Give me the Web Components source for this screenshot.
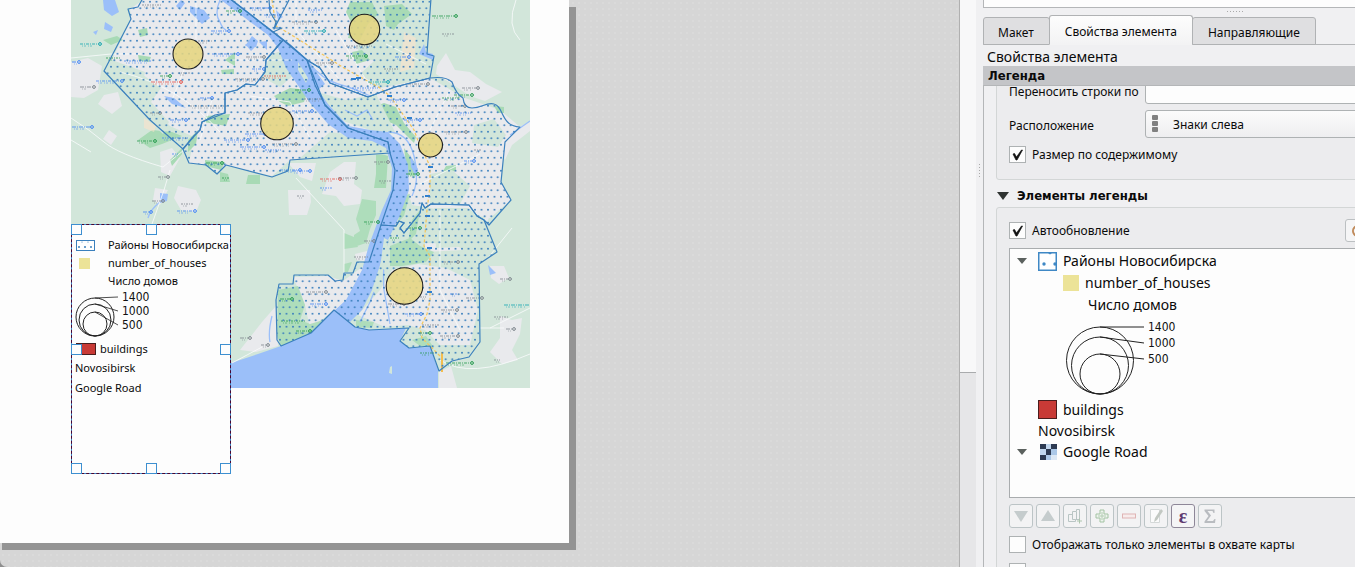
<!DOCTYPE html>
<html lang="ru">
<head>
<meta charset="utf-8">
<title>Макет</title>
<style>
html, body { height: 100%; margin: 0; }
body { overflow: hidden; background: #efeff1; color: #0a0a0a; font: 12px/16px "Noto Sans", sans-serif; }
</style>
</head>
<body>
<layout-designer></layout-designer>
<script>
const define = (name, html, setup) => {
  const tpl = document.createElement('template');
  tpl.innerHTML = html;
  customElements.define(name, class extends HTMLElement {
    constructor() {
      super();
      this.attachShadow({ mode: 'open' }).append(tpl.content.cloneNode(true));
    }
    connectedCallback() { if (setup) setup(this, this.shadowRoot); }
  });
};

/* Nested proportional circles with their values */
define('size-legend', `
<style>
:host { display: block; }
svg { display: block; width: 100%; height: 100%; overflow: visible; }
text { font: 12px "DejaVu Sans Condensed", "DejaVu Sans", sans-serif; fill: #111; }
</style>
<svg></svg>`, (el, root) => {
  const small = el.hasAttribute('compact');
  const [cx, base, tx, radii, rows] = small
    ? [20, 39, 47, [19, 16, 12], [-1, 13, 27]]
    : [34, 75, 82, [33.5, 28.5, 20], [8, 24, 40]];
  root.querySelector('svg').innerHTML = radii.map((r, i) => `
    <circle cx="${cx}" cy="${base - r}" r="${r}" fill="none" stroke="#222"/>
    <path d="M${cx} ${base - 2 * r}L${tx - 4} ${rows[i] + (small ? 1 : 0)}" stroke="#222" stroke-width="${small ? .8 : 1}"/>
    <text x="${tx}" y="${rows[i] + (small ? 5 : 4)}">${[1400, 1000, 500][i]}</text>`).join('');
});

/* Map with district polygons and proportional symbols */
define('city-map', `
<style>:host { display: block; } svg { display: block; }</style>
<svg width="459" height="388" viewBox="71 0 459 388" role="img" aria-label="Novosibirsk">
<defs>
  <pattern id="dots" patternUnits="userSpaceOnUse" x="436" y="226" width="6.5" height="13">
    <circle cx="3.25" cy="3.25" r=".95" fill="#3b80bd"/>
    <circle cx="0" cy="9.75" r=".95" fill="#3b80bd"/><circle cx="6.5" cy="9.75" r=".95" fill="#3b80bd"/>
  </pattern>
</defs>
<rect x="71" width="459" height="388" fill="#d2e6da"/>
<g fill="#e9eaed">
  <path d="M143 0L130 9 131 19 112 60 145 72 140 95 170 126 194 137 189 163 206 165 217 172 226 165 272 176 289 161 300 158 330 132 392 140 412 205 490 218 511 200 501 182 505 142 520 127 500 110 465 98 430 78 400 60 360 60 350 0Z"/>
  <path d="M71 62L88 58 102 66 98 90 84 98 71 97ZM104 95L118 92 122 106 112 114 98 104ZM109 130L117 136 111 145 103 139ZM160 152L172 148 180 158 170 176 161 172ZM155 188L168 190 160 205 153 200ZM178 186L196 190 201 200 196 212 181 210 174 198Z"/>
  <path d="M436 74L437 66 446 53 455 70 470 72 486 84 502 92 485 101 470 96 455 86ZM508 132L530 122 530 131 512 145 505 160 502 150Z"/>
  <path d="M288 190h22l1 12 -4 13h-18ZM330 172l14 -10 12 0 -2 22 8 6 -2 14-16 2-8-10-14-2ZM355 254l16 -4 0 12-15-2ZM288 163h28l-4 18-12-4Z"/>
  <path d="M293 277L328 276 343 281 369 262 352 300 334 311 310 328 305 305ZM358 315L380 290 392 270 418 264 446 268 470 280 478 310 470 345 440 345 425 330 408 325 385 327ZM456 235L490 215 485 228 468 240ZM425 243l30 1 8 6-38 2Z"/>
  <path d="M240 350L262 322 276 306 278 346 256 352ZM184 280l8-6 2 14 20-2-2 20-24 8ZM490 266l14 0 5 12-10 6-8-6ZM500 316l12 4 10 -2-2 16 -8 16 6 10-16 4-12-12 10-14ZM439 372l12-6 6 22h-18Z"/>
</g>
<g fill="#a8dab5">
  <path d="M103 40l14-4 6 4-12 5ZM138 30l9-2 1 7-8 2ZM225 60l10-8v14ZM138 55l13 2-2 5-10-1ZM221 70l13-1v5h-12ZM206 116l24-2-4 12-22-4ZM274 96l16-8 18 2-4 12-16 4-8-4ZM138 140l14-10 20 2 10 4-20 8-12 4ZM188 140l10-10-2 14-8 8ZM205 160l20 2-4 8-16-4ZM220 172l8 2 2 8h-10ZM248 175h12v9h-14ZM170 160l12-12 0 6-10 12Z"/>
  <path d="M350 2h22l6 12-10 10-8 16-12-2 4-14-6-12ZM384 6l18-2 10 10-14 10-4 6-8-4ZM352 52l10-2 8 10-14 4ZM376 106l8-3 12 4 8 16 12 14-2 6-18-18-17-7ZM376 152l12 4-2 32-12 0 2-14ZM404 148l12 16-1 14-8-4ZM446 166l10-1 0 6-14 2ZM404 164l8 4 -2 6-8-2ZM494 106l10 1v6h-6Z"/>
  <path d="M278 290L298 286 305 305 300 320 310 324 330 318 312 333 281 346 277 336ZM344 233l10 4 4 10-14 2ZM362 199l14 2 0 14-6 14-4 14-12 4 0-12 6-4-4-12ZM390 246l20-8 10 8 14 6-8 10-24 4-12 0ZM402 196l8-2-6 22-6 6ZM412 220l8-10-4 24-8 8ZM344 264l8-2-4 10h-4ZM356 320l18 2-2 6-16-1ZM412 340l14 -4 8 12-14-2Z" opacity=".85"/>
</g>
<path fill="#d2e6da" d="M392 40l38-10 0 26 0 22-50 10-20 -14 26-24ZM310 90l36 10 30-6 20 40 -20-2-30-10-30-14ZM474 125l20-6 12 16-8 12-26-4ZM430 174l22-4 18 16-10 18-30 0ZM131 66l30 22-10 14 18 20-6 12-26-24-34-38ZM270 55l16-6 10 24-16 14-18-10ZM330 140l30 0 30 6 0 8-70 4-10-8ZM434 208l34 0 20 14-10 24-42 2Z"/>
<path fill="#fbe3cc" opacity=".6" d="M404 32l12 6-2 30-14 4ZM144 118l12 8-2 6-10-4Z"/>
<g fill="#9bbff9">
  <path d="M221 0h12L290 44 308 60 325 84 318 90 328 104 348 126 370 130 388 132 400 144 408 165 409 190 400 215 388 240 380 265 372 290 362 310 350 322 334 311 346 300 362 270 369 245 382 210 391 190 392 168 386 148 372 141 348 138 328 124 310 103 286 68 278 48 268 35 245 18Z"/>
  <path d="M231 363L258 354 281 346 310 333 334 310 355 327 369 330 406 328 400 341 409 348 430 347 438 370V388H231Z"/>
  <path d="M103 0h12l4 12-7 4-8-6ZM105 22l8 5-2 5-7-3ZM181 0l4 3-5 7-4-4ZM190 6l14 4 6 8-8 6-12-12ZM252 36l6 5-2 6-11-1ZM164 96l10 2 12 10-14-4ZM93 32l5-2-2 5ZM259 42l8-1v9ZM424 44l2 8 7 2 0 6-14-6ZM276 10l7 7-5 3ZM160 193l8 1-1 7-7 2ZM488 265l8 8 -6 2ZM245 44l12 1-6 6ZM410 155l8 14-2 8-5-10Z"/>
</g>
<g fill="none" stroke="#9bbff9" stroke-width="1.3">
  <path d="M220 0q-6 14 0 22q2 6 6 8M160 202q-10 8-12 16M308 62q15 18 30 22t32 12M345 110l12 6 10-6 6 10M388 132q20 0 26 24t-2 40M388 240q-6 20-4 50l6 34M272 316q-4 16-2 26M510 135l20-14M360 322l10-20 4-10"/>
</g>
<g fill="#d2e6da"><path d="M384 238l4 2-3 30-5-2ZM298 62l10 16-2 5-8-13ZM390 367l2-1 0 8-3-1Z"/></g>
<g fill="none" stroke="#fafbfc" stroke-width=".8">
  <path d="M71 118Q90 130 104 142T163 167M163 167L184 150M296 178L344 230V275M71 58l40-4 30 0M120 72q60 14 100 60M196 0v40l-24 60M232 60h60M520 40q-14-14-4-40M232 363l30-16M480 328h24M440 360q30 20 90-6M420 184l60-30M170 170l-6 20-12 34M71 140l20 12M488 258l24-30M490 328l40-20M296 0v30l44 50M250 96l40 6 20 36M212 100l-12 40M336 30l36 60M386 44l40 20M450 90l-30 60M440 210v80l20 40"/>
</g>
<path fill="none" stroke="#f6c65a" stroke-width="1.2" stroke-dasharray="3 2" d="M272 0l4 26 14 8 54 34 36 20 10 8 24 34 6 16 10 20v20l-3 24-3 36 6 10v44l-3 14-7 14 2 10 12 12 6 6"/>
<path stroke="#f4bd4e" stroke-width="2" d="M442 352v20"/>
<g id="labels" fill="none"></g>
<g id="districts" fill="url(#dots)" stroke="#3b80bd" stroke-width="1.2" stroke-linejoin="round">
  <path d="M143 -2L138 7 128 9 131 19 104 71 150 120 183 149 194 136 200 130 202 122 225 113 225 93 237 90 246 84 255 85 265 72 266 60 283 40 229 -2Z"/>
  <path d="M183 149L189 163 206 165 217 174 226 165 272 177 288 171 290 160 390 153 388 142 348 128 325 105 315 85 307 60 283 40 266 60 265 72 255 85 246 84 237 90 225 93V113L215 115 202 122 200 130 194 136Z"/>
  <path d="M229 -2L290 45 307 60 320 68 330 83 368 97 395 87 430 78 434 56 427 54 431 -2Z"/>
  <path d="M430 78Q446 76 452 82Q456 94 463 98Q464 108 472 108C482 108 486 102 494 104C504 106 500 126 520 127L505 142 501 182 511 200 489 225 484 220 477 216 469 205 431 204 425 208 422 203 420 213 404 233 400 228 404 223 399 221 396 226 381 225 393 190 395 170 390 153 388 142 348 128 325 105 307 60 320 68 330 83 368 97 395 87Z"/>
  <path d="M381 225L369 262 357 262 353 273 344 273 343 280 335 281 328 275 294 275 293 284 279 284 276 300 277 340 281 346 311 333 334 310 355 327 369 330 409 328 400 341 409 348 430 346 439 371 452 361 469 357 480 342 479 264 497 252 484 220 477 216 469 205 431 204 425 208 422 203 420 213 404 233 400 228 404 223 399 221 396 226Z"/>
  <path fill="none" d="M269 0L270 12 276 22 274 29 289 0M275 28h7l-9 4"/>
</g>
<g fill="#e5d57f" fill-opacity=".88" stroke="#1f1f1f" stroke-width="1.1">
  <circle cx="188" cy="54" r="15"/><circle cx="277" cy="123.500" r="16.300"/><circle cx="364.500" cy="29.500" r="15.200"/><circle cx="430.500" cy="145" r="12"/><circle cx="404.500" cy="286" r="18.300"/>
</g>
</svg>`, (el, root) => {
  const colours = { b: '#4285f4', g: '#239a4b', k: '#7d858c', r: '#e5534b', t: '#12a4af' };
  const places = [
    [142,5,20,'k'],[226,11,12,'g'],[211,31,16,'b'],[198,41,14,'k'],[212,54,24,'b'],[246,57,16,'k'],[124,61,28,'b'],[80,44,18,'t'],[72,62,5,'b'],[106,58,14,'g'],[160,76,8,'g'],[151,82,28,'r'],[178,73,12,'k'],[96,81,24,'b'],[80,87,12,'k'],[264,76,22,'r'],[235,79,26,'k'],[200,98,10,'b'],[190,106,38,'k'],[150,113,8,'k'],[170,120,14,'b'],[162,138,26,'b'],[137,141,16,'g'],[72,127,18,'b'],[172,154,6,'b'],[158,177,8,'k'],[206,163,14,'g'],[222,178,8,'g'],[224,140,22,'b'],[240,147,22,'b'],[265,150,16,'b'],[272,144,22,'k'],[245,134,18,'b'],[248,113,18,'k'],[280,170,18,'b'],[292,171,16,'b'],
    [308,10,14,'b'],[292,22,22,'k'],[304,31,18,'t'],[346,46,26,'k'],[346,56,18,'g'],[395,57,12,'b'],[384,69,14,'k'],[316,63,14,'k'],[368,82,18,'t'],[352,88,26,'b'],[408,84,18,'k'],[388,100,14,'b'],[442,98,18,'g'],[454,95,16,'g'],[451,106,12,'k'],[455,113,16,'b'],[404,120,14,'b'],[444,132,20,'k'],[474,150,8,'k'],[464,161,8,'b'],[432,16,22,'g'],[442,34,12,'k'],[462,88,14,'k'],[295,90,12,'g'],[304,99,20,'k'],[320,179,18,'r'],[338,178,16,'k'],[320,188,12,'b'],[374,162,12,'k'],[406,174,10,'g'],[379,181,12,'k'],[292,111,18,'b'],[250,8,18,'b'],[264,15,18,'b'],[252,69,10,'b'],
    [152,201,9,'k'],[181,204,12,'k'],[177,211,16,'b'],[143,212,6,'b'],[297,196,8,'k'],[364,222,12,'g'],[364,241,8,'k'],[354,257,14,'k'],[306,292,18,'k'],[310,304,14,'b'],[281,321,24,'g'],[296,331,12,'g'],[280,299,10,'g'],[390,238,10,'g'],[408,228,10,'g'],[442,262,14,'k'],[450,294,8,'b'],[466,298,14,'k'],[388,304,14,'k'],[420,297,6,'k'],[405,314,14,'b'],[441,310,14,'k'],[422,325,18,'k'],[440,336,16,'k'],[418,333,10,'g'],[420,353,14,'g'],[446,363,24,'g'],[504,305,26,'t'],[494,317,14,'k'],[500,279,8,'k'],[506,329,6,'k'],[494,360,6,'k'],[261,345,5,'k'],[240,338,8,'k']
  ];
  root.getElementById('labels').innerHTML = places.map(([x, y, w, c], i) => {
    const s = colours[c];
    return `<path d="M${x} ${y}h${w}" stroke="${s}" stroke-dasharray="${2 + i % 3} 1 1 1" stroke-width="1.2" opacity=".8"/>
      <path d="M${x + 2} ${y + 2}h${Math.max(3, w - 7)}" stroke="${s}" stroke-dasharray="1 1 2 2" opacity=".5"/>` +
      (i % 3 ? `<circle cx="${x + w + 2}" cy="${y}" r="1.4" stroke="${s}"/>` : '');
  }).join('') + [[353,79],[358,78],[389,96],[409,118],[430,167],[427,196],[427,216],[429,248],[429,292]]
    .map(([x, y]) => `<path d="M${x - 2} ${y}h5" stroke="#2f7fd0" stroke-width="2"/>`).join('');
});

/* Selected legend item on the sheet */
define('legend-item', `
<style>
:host { display: block; box-sizing: border-box; width: 160px; height: 250px; border: 1px dashed #4a0530; background: linear-gradient(#fdfdfd, #fdfdfd) padding-box, #3d8fd0 border-box; font-size: 11px; line-height: 18px; }
ul { list-style: none; margin: 0; padding: 11px 0 0 3px; }
li { display: flex; align-items: center; white-space: nowrap; height: 18px; }
svg { flex: none; }
.key { display: flex; width: 33px; flex: none; }
.tall { height: 20px; }
size-legend { width: 90px; height: 42px; margin-top: 7px; }
.circles { height: 50px; align-items: flex-start; }
.handles { position: absolute; inset: -1px; display: grid; grid-template-columns: repeat(3, 11px); grid-template-rows: repeat(3, 11px); justify-content: space-between; align-content: space-between; }
.handles i { box-sizing: border-box; border: 1px solid #3d8fd0; background: #fdfdfd; }
.handles i:nth-child(5) { visibility: hidden; }
</style>
<ul>
<li><span class="key"><svg width="20" height="11"><rect x="1.500" y=".5" width="18" height="10" fill="#fff" stroke="#3b80bd"/><g fill="#3b80bd"><circle cx="4" cy="7" r="1"/><circle cx="10" cy="7" r="1"/><circle cx="16" cy="7" r="1"/><circle cx="7" cy="2" r=".6"/><circle cx="13" cy="2" r=".6"/></g></svg></span>Районы Новосибирска</li>
<li><span class="key"><svg width="16" height="11"><rect x="4" width="11" height="11" fill="#ece398"/></svg></span>number_of_houses</li>
<li><span class="key"></span>Число домов</li>
<li class="circles"><size-legend compact></size-legend></li>
<li><svg width="25" height="12"><rect x="1.500" y=".5" width="19" height="11" fill="#c83a36" stroke="#4a1d1d"/></svg>buildings</li>
<li class="tall">Novosibirsk</li>
<li class="tall">Google Road</li>
</ul>
<div class="handles"><i></i><i></i><i></i><i></i><i></i><i></i><i></i><i></i><i></i></div>`);

define('layout-canvas', `
<style>
:host { display: block; overflow: hidden; border-bottom-left-radius: 7px; background: radial-gradient(circle, #dadada 1px, transparent 1px) 0 0 / 6px 6px, #d6d6d6; }
.sheet { position: relative; width: 569px; padding-bottom: 155px; background: #fdfdfd; box-shadow: 7px 7px 0 #949494, 2px 7px 0 #949494; }
city-map { margin-left: 71px; }
legend-item { position: absolute; left: 71px; top: 224px; }
</style>
<div class="sheet"><city-map></city-map><legend-item></legend-item></div>`);

define('canvas-scrollbar', `
<style>
:host { display: flex; flex-direction: column; border-left: 1px solid #b0b0b0; background: #e6e6e8; }
div { height: 372px; background: #f8f8f9; border-bottom: 1px solid #a9abad; }
</style><div></div>`);

define('tab-strip', `
<style>
:host { display: flex; align-items: flex-end; height: 30px; background: linear-gradient(#b4b6b8, #b4b6b8) 0 100% / 100% 1px no-repeat; }
button { box-sizing: border-box; height: 28px; margin: 0; padding: 4px 15px 0 14px; border: 1px solid #b0b2b4; border-radius: 3px 3px 0 0; background: #dfdfe1; color: inherit; font: inherit; white-space: nowrap; }
button + button { margin-left: -1px; padding-left: 15px; }
button.on { height: 30px; padding-top: 3px; border-bottom-color: #f3f3f4; background: linear-gradient(#fdfdfd, #f3f3f4); }
</style>
<button>Макет</button><button class="on">Свойства элемента</button><button>Направляющие</button>`);

define('check-box', `
<style>
:host { display: block; }
label { display: flex; align-items: center; gap: 6px; height: 17px; white-space: nowrap; }
input { appearance: none; box-sizing: border-box; width: 17px; height: 17px; margin: 0; border: 1px solid #aeb2b3; background: #fdfdfd; flex: none; }
input:checked { background: #fdfdfd url("data:image/svg+xml,%3Csvg xmlns='http://www.w3.org/2000/svg' viewBox='0 0 15 15'%3E%3Cpath d='M3 7l1.500-.5 2 3.500L11.500 3h1L7 13H6z' fill='%23111' stroke='%23111' stroke-width='.7'/%3E%3C/svg%3E"); }
</style>
<label><input type="checkbox"><slot></slot></label>`, (el, root) => {
  root.querySelector('input').checked = el.hasAttribute('checked');
});

define('legend-tree', `
<style>
:host { display: block; box-sizing: border-box; height: 250px; border: 1px solid #a9acae; background: #fdfdfd; font: 14px/20px "Noto Sans", sans-serif; }
ul { list-style: none; margin: 0; padding: 1px 0 0; }
li { display: flex; align-items: center; height: 22px; white-space: nowrap; }
li.low { height: 21px; }
svg { flex: none; display: block; }
.arrow { margin: 0 11px 0 7px; }
.gap { width: 28px; flex: none; }
.l2 { padding-left: 53px; }
.l3 { padding-left: 78px; }
.icon { margin-right: 6px; }
size-legend { width: 115px; height: 78px; margin-left: 56px; }
.circles { height: 83px; align-items: flex-start; padding-top: 3px; box-sizing: border-box; }
</style>
<ul>
<li><svg class="arrow" width="10" height="6"><path d="M0 0h10L5 6z" fill="#5b615e"/></svg><svg class="icon" width="19" height="19"><rect x=".75" y=".75" width="17.500" height="17.500" fill="#fff" stroke="#3f88c5" stroke-width="1.500"/><g fill="#3f88c5"><circle cx="6" cy="12" r="1.700"/><circle cx="17" cy="12" r="1.700"/><path d="M10 1h4l-2 1.500z"/></g></svg>Районы Новосибирска</li>
<li class="l2"><svg class="icon" width="16" height="16"><rect width="16" height="16" fill="#ece398"/></svg>number_of_houses</li>
<li class="l3">Число домов</li>
<li class="circles"><size-legend></size-legend></li>
<li class="low"><span class="gap"></span><svg class="icon" width="19" height="19"><rect x=".5" y=".5" width="18" height="18" fill="#c83a36" stroke="#4a1d1d"/></svg>buildings</li>
<li class="low"><span class="gap"></span>Novosibirsk</li>
<li class="low"><svg class="arrow" width="10" height="6"><path d="M0 0h10L5 6z" fill="#5b615e"/></svg><svg class="icon" width="19" height="18"><rect x="2" y="1" width="17" height="16" fill="#abc8e8"/><path fill="#2d3a52" d="M2 1h6v5H2zM13 1h6v5h-6zM8 6h5v6H8zM2 12h6v5H2z"/><path fill="#d8e6f5" d="M8 1h5v5H8zM2 6h6v6H2z" opacity=".5"/><path fill="#fdfdfd" d="M13 12h6v5h-6z" opacity=".6"/></svg>Google Road</li>
</ul>`);

define('tree-tools', `
<style>
:host { display: flex; gap: 3px; }
button { display: grid; place-items: center; box-sizing: border-box; width: 24px; height: 24px; margin: 0; padding: 0; border: 1px solid #bcc4c6; border-radius: 3px; background: #f3f3f4; }
button.on { border-color: #8e8798; background: #f5f5f6; color: #5f3b70; font: bold 20px/20px "Liberation Serif", serif; }
</style>
<button aria-label="Вниз"><svg width="16" height="16"><path d="M1 3h14L8 14z" fill="#c5cccd"/></svg></button>
<button aria-label="Вверх"><svg width="16" height="16"><path d="M1 13h14L8 2z" fill="#c5cccd"/></svg></button>
<button aria-label="Группа"><svg width="16" height="16" fill="none" stroke="#b9c5c4"><path d="M1.500 6.500h4v-3h4v-2h3v10h-4v2h-7z"/><path d="M5.500 6v5.500h3M9.500 4v8"/><path d="M10 13h5M12.500 10.500v5" stroke="#adc5ad"/></svg></button>
<button aria-label="Добавить"><svg width="16" height="16"><path d="M6 2h4v4h4v4h-4v4H6v-4H2V6h4z" fill="#eef3ee" stroke="#a3c3a3"/><path d="M8 4v8M4 8h8" stroke="#b5ceb5"/></svg></button>
<button aria-label="Удалить"><svg width="16" height="16"><rect x="1.500" y="6" width="13" height="4" fill="#f7ecec" stroke="#dfb4b4"/></svg></button>
<button aria-label="Изменить"><svg width="16" height="16"><path d="M2.500 1.500h9v13h-9z" fill="#fbfbfb" stroke="#d4d8d8"/><path d="M13 1l2 2-6 9-3 2 1-4z" fill="#c2c8c2"/></svg></button>
<button class="on" aria-label="Выражение">ε</button>
<button aria-label="Сумма"><svg width="16" height="16"><path d="M2.500 1.500h10v3.500h-1l-1-2H5.500L9 7.500 5 13h6l1.500-2h1L13 15H2.500v-1.500L6.500 8 2.500 3z" fill="#b9bcc0"/></svg></button>`);

define('group-frame', `
<style>
:host { display: block; box-sizing: border-box; margin: 0 -20px 0 13px; border: 1px solid #d3d6d6; border-radius: 3px; background: #ececee; padding: 0 0 0 12px; }
</style><slot></slot>`);

define('item-properties', `
<style>
:host { display: flex; flex-direction: column; min-width: 0; overflow: hidden; background: #f0f0f2; }
.above { box-sizing: border-box; height: 8px; flex: none; border: solid #b4b6b8; border-width: 0 0 1px 1px; background: #fdfdfd; }
.grip { height: 7px; flex: none; display: flex; gap: 2px; padding-left: 244px; align-items: center; }
.grip i { width: 1px; height: 1px; background: #aaa; }
h2 { margin: 0; padding-left: 4px; height: 21px; font: 14px/23px "Noto Sans", sans-serif; }
h3 { margin: 0; font: bold 13px/20px "DejaVu Sans Condensed", "DejaVu Sans", sans-serif; }
.head { padding-left: 5px; height: 20px; background: #c4c5c8; border-bottom: 1px solid #b4b6b8; box-sizing: border-box; flex: none; }
tab-strip, h2 { flex: none; }
.scroll { flex: 1; min-height: 0; overflow: hidden; border-left: 1px solid #b4b6b8; box-sizing: border-box; }
.first { margin-top: -11px; height: 105px; margin-left: 12px; }
.field { display: grid; grid-template-columns: 136px 1fr; align-items: center; margin-bottom: 6px; height: 28px; }
.field + .field { margin-bottom: 8px; }
.field label { white-space: nowrap; padding-top: 4px; }
input, select { appearance: none; box-sizing: border-box; width: 100%; height: 28px; margin: 0; border: 1px solid #aeb2b3; border-radius: 3px; background: #fdfdfd; color: inherit; font: inherit; }
select { padding: 2px 0 0 27px; background: url("data:image/svg+xml,%3Csvg xmlns='http://www.w3.org/2000/svg' width='6' height='17' fill='%23808080'%3E%3Crect width='6' height='5' rx='1'/%3E%3Crect y='6' width='6' height='5' rx='1'/%3E%3Crect y='12' width='6' height='5' rx='1'/%3E%3C/svg%3E") 6px 4px no-repeat, linear-gradient(#fbfbfb, #eeeef0); }
.title { display: flex; align-items: center; gap: 8px; height: 27px; padding: 4px 0 0 13px; box-sizing: border-box; }
.second { margin-left: 12px; padding-top: 11px; height: 380px; }
.row { display: flex; justify-content: space-between; align-items: center; height: 23px; margin-bottom: 6px; }
.row button { width: 29px; height: 23px; box-sizing: border-box; border: 1px solid #bcc0c2; border-radius: 3px; background: #f5f5f6; padding: 0 0 0 6px; margin: 0; }
.row svg { display: block; }
tree-tools { margin: 6px 0 8px; }
check-box + check-box { margin-top: 10px; }
</style>
<div class="above"></div>
<div class="grip"><i></i><i></i><i></i><i></i><i></i><i></i></div>
<tab-strip></tab-strip>
<h2>Свойства элемента</h2>
<h3 class="head">Легенда</h3>
<div class="scroll">
  <group-frame class="first">
    <div class="field"><label for="wrap">Переносить строки по</label><input id="wrap" type="text"></div>
    <div class="field"><label for="arr">Расположение</label><select id="arr"><option>Знаки слева</option></select></div>
    <check-box checked>Размер по содержимому</check-box>
  </group-frame>
  <div class="title"><svg width="12" height="8"><path d="M0 0h12L6 8z" fill="#2f3332"/></svg><h3>Элементы легенды</h3></div>
  <group-frame class="second">
    <div class="row"><check-box checked>Автообновление</check-box><button aria-label="Обновить"><svg width="12" height="12"><path d="M9 2a5 5 0 1 0 0 8" fill="none" stroke="#c08a5a" stroke-width="2"/></svg></button></div>
    <legend-tree></legend-tree>
    <tree-tools></tree-tools>
    <check-box>Отображать только элементы в охвате карты</check-box>
    <check-box></check-box>
  </group-frame>
</div>`);

define('layout-designer', `
<style>
:host { display: grid; grid-template-columns: minmax(0, 1fr) 17px 7px 372px; height: 100vh; background: #8e8e8e; }
.splitter { background: #f0f0f2; display: flex; flex-direction: column; gap: 2px; align-items: center; padding-top: 164px; box-sizing: border-box; }
.splitter i { width: 1px; height: 1px; background: #aaa; flex: none; }
</style>
<layout-canvas></layout-canvas>
<canvas-scrollbar></canvas-scrollbar>
<div class="splitter"><i></i><i></i><i></i><i></i><i></i></div>
<item-properties></item-properties>`);
</script>
</body>
</html>
